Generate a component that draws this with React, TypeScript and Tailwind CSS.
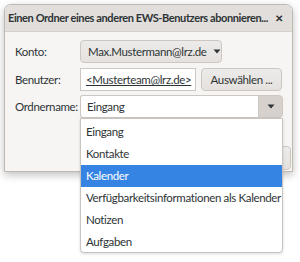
import React from "react";

const items = [
  "Eingang",
  "Kontakte",
  "Kalender",
  "Verfügbarkeitsinformationen als Kalender",
  "Notizen",
  "Aufgaben",
];

function Arrow() {
  return (
    <svg width="8" height="5" viewBox="0 0 8 5" className="shrink-0">
      <path d="M0.5 0.5 L7.5 0.5 L4 4.5 Z" fill="#2e3436" />
    </svg>
  );
}

export default function App() {
  return (
    <div
      className="relative w-[300px] h-[262px] bg-white overflow-hidden text-[11.5px] tracking-[-0.35px] text-[#2e3436]"
      style={{ fontFamily: 'Lato, "Open Sans", sans-serif' }}
    >
      <div className="absolute left-[4px] top-[4px] w-[289px] h-[168px] flex flex-col rounded-t-[7px] border border-[#bfb8b1] bg-[#f6f5f4] shadow-[0_3px_9px_rgba(0,0,0,0.25)] overflow-hidden">
        <div className="h-[27px] shrink-0 flex items-center justify-between pl-[3px] pr-[9px] bg-[#e1dedb] border-b border-[#d5d0cc]">
          <span className="text-[11px] font-bold tracking-[-0.4px] whitespace-nowrap">
            Einen Ordner eines anderen EWS-Benutzers abonnieren...
          </span>
          <span className="text-[10px] font-bold">✕</span>
        </div>
        <div className="flex flex-col pt-[8px] pl-[10px]">
          <div className="flex items-center h-[23px]">
            <span className="w-[65px]">Konto:</span>
            <div className="h-[23px] w-[142px] flex items-center gap-[6px] pl-[7px] rounded-[4px] border border-[#cdc7c2] bg-gradient-to-b from-[#edebe9] to-[#e4e1de]">
              <span>Max.Mustermann@lrz.de</span>
              <Arrow />
            </div>
          </div>
          <div className="flex items-center h-[23px] mt-[5px]">
            <span className="w-[65px]">Benutzer:</span>
            <div className="h-[23px] w-[116px] flex items-center pl-[5px] border border-[#cdc7c2] bg-white">
              <span className="underline">&lt;Musterteam@lrz.de&gt;</span>
            </div>
            <div className="h-[23px] w-[81px] ml-[5px] flex items-center justify-center rounded-[4px] border border-[#cdc7c2] bg-gradient-to-b from-[#edebe9] to-[#e4e1de]">
              Auswählen ...
            </div>
          </div>
          <div className="flex items-center h-[23px] mt-[4px]">
            <span className="w-[65px]">Ordnername:</span>
            <div className="h-[23px] w-[178px] flex items-center pl-[6px] border border-r-0 border-[#cdc7c2] rounded-l-[3px] bg-white">
              Eingang
            </div>
            <div className="h-[23px] w-[25px] flex items-center justify-center border border-[#cdc7c2] rounded-r-[4px] bg-[#d6d1cd]">
              <Arrow />
            </div>
          </div>
          <div className="flex justify-end pr-[1px] mt-[28px]">
            <div className="h-[24px] w-[80px] rounded-[4px] border border-[#cdc7c2] bg-gradient-to-b from-[#edebe9] to-[#e4e1de]" />
          </div>
        </div>
      </div>
      <div className="absolute left-[80px] top-[118px] w-[203px] h-[135px] pt-[2px] pb-[1px] bg-white border border-[#c9c4bf] rounded-b-[4px] shadow-[0_1px_3px_rgba(0,0,0,0.15)]">
        {items.map((it, i) => (
          <div
            key={i}
            className={
              "h-[22px] flex items-center pl-[5px] whitespace-nowrap " +
              (i === 2 ? "bg-[#3584e4] text-white" : "")
            }
          >
            {it}
          </div>
        ))}
      </div>
    </div>
  );
}
